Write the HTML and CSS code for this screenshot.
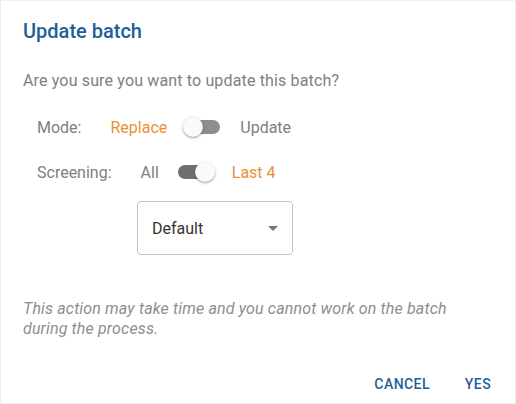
FILE: index.html
```html
<!DOCTYPE html>
<html>
<head>
<meta charset="utf-8">
<link rel="stylesheet" href="styles.css">
</head>
<body>
<div class="dialog">
  <h2 class="title">Update batch</h2>
  <p class="question">Are you sure you want to update this batch?</p>
  <div class="options">
    <div class="row">
      <span class="label">Mode:</span>
      <span class="opt active">Replace</span>
      <span class="switch"><span class="track"></span><span class="thumb"></span></span>
      <span class="opt">Update</span>
    </div>
    <div class="row">
      <span class="label">Screening:</span>
      <span class="opt">All</span>
      <span class="switch on"><span class="track"></span><span class="thumb"></span></span>
      <span class="opt active">Last 4</span>
    </div>
    <div class="select">
      <span>Default</span>
      <span class="caret"></span>
    </div>
  </div>
  <p class="note">This action may take time and you cannot work on the batch during the process.</p>
  <div class="actions">
    <button class="btn">CANCEL</button>
    <button class="btn">YES</button>
  </div>
</div>
</body>
</html>
```

FILE: styles.css
```css
html, body {
  margin: 0;
  padding: 0;
  background: #fff;
}
body {
  font-family: Roboto, "Liberation Sans", sans-serif;
}
.dialog {
  width: 516px;
  height: 404px;
  box-sizing: border-box;
  border: 1px solid #efefef;
  padding: 17px 22px 0 22px;
  display: flex;
  flex-direction: column;
}
.title {
  margin: 0;
  font-size: 20px;
  font-weight: 500;
  color: #1f5e98;
  line-height: 26px;
}
.question {
  margin: 27px 0 0 0;
  font-size: 16px;
  letter-spacing: 0.15px;
  line-height: 20px;
  color: #808080;
}
.options {
  margin: 17px 0 0 14px;
  display: flex;
  flex-direction: column;
}
.row {
  display: flex;
  align-items: center;
  height: 38px;
  margin-bottom: 7px;
  font-size: 16px;
  color: #808080;
}
.label {
  margin-right: 29px;
}
.opt.active {
  color: #e8913a;
}
.switch {
  position: relative;
  width: 58px;
  height: 38px;
  margin: 0 8px 0 7px;
  flex: none;
}
.track {
  position: absolute;
  left: 12px;
  top: 12px;
  width: 34px;
  height: 14px;
  border-radius: 7px;
  background: #8e8e8e;
}
.switch.on .track {
  background: #6f6f6f;
}
.thumb {
  position: absolute;
  left: 9px;
  top: 9px;
  width: 20px;
  height: 20px;
  border-radius: 50%;
  background: #fafafa;
  box-shadow: 0 1px 3px rgba(0,0,0,0.3), 0 1px 1px rgba(0,0,0,0.14);
}
.switch.on .thumb {
  left: 29px;
}
.select {
  margin: 3px 0 0 100px;
  width: 156px;
  height: 54px;
  box-sizing: border-box;
  border: 1px solid #c4c4c4;
  border-radius: 4px;
  display: flex;
  align-items: center;
  justify-content: space-between;
  padding: 0 14px 0 14px;
  font-size: 16px;
  color: #333;
}
.caret {
  width: 0;
  height: 0;
  border-left: 5px solid transparent;
  border-right: 5px solid transparent;
  border-top: 5px solid #757575;
}
.note {
  margin: 44px 0 0 0;
  font-size: 16px;
  letter-spacing: 0.15px;
  line-height: 19.5px;
  font-style: italic;
  color: #8e8e8e;
  max-width: 440px;
}
.actions {
  margin-top: auto;
  display: flex;
  justify-content: flex-end;
  gap: 8px;
  padding-bottom: 1px;
  margin-right: -17px;
}
.btn {
  background: none;
  border: none;
  font-family: Roboto, "Liberation Sans", sans-serif;
  font-size: 14px;
  font-weight: 500;
  letter-spacing: 0.45px;
  color: #1f5e98;
  padding: 6px 8px;
  min-width: 64px;
  height: 36px;
}
```
